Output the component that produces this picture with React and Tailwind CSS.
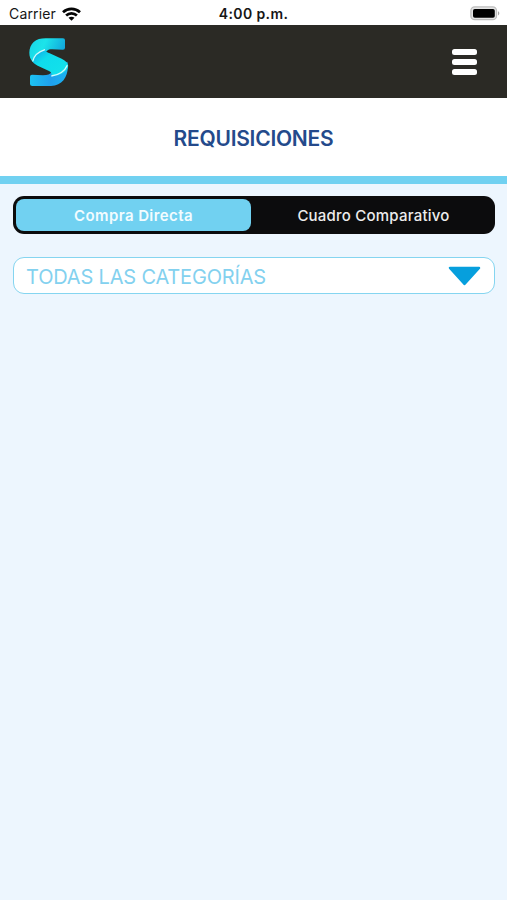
import { useState } from 'react';

const TABS = [
  { id: 'directa', label: 'Compra Directa', width: 'w-[235px]' },
  { id: 'comparativo', label: 'Cuadro Comparativo', width: 'flex-1 pl-1' },
];

const WifiIcon = () => (
  <svg width="19" height="14" viewBox="0 0 19 14" fill="none" stroke="#050505" strokeWidth="2.7">
    <path d="M1 5.2C5.8 0.7 13.2 0.7 18 5.2" />
    <path d="M4.1 8.5C7.2 5.6 11.8 5.6 14.9 8.5" />
    <path d="M9.5 13.8L6.5 10.8C8.2 9.3 10.8 9.3 12.5 10.8Z" fill="#050505" stroke="none" />
  </svg>
);

const BatteryIcon = () => (
  <svg width="30" height="15" viewBox="0 0 30 15" fill="none">
    <rect x="0.9" y="0.9" width="25.6" height="12.8" rx="3.8" fill="#e4e4e4" stroke="#bdbdbd" strokeWidth="1.3" />
    <rect x="3" y="3" width="21.8" height="8.7" rx="1.8" fill="#000" />
    <path d="M28 5.2C29.8 5.9 29.8 8.7 28 9.4Z" fill="#a5a5a5" />
  </svg>
);

const Logo = () => (
  <svg width="40" height="50" viewBox="28 21 120 150">
    <defs>
      <linearGradient id="logoTop" x1="0" y1="0" x2="1" y2="0.3">
        <stop offset="0" stopColor="#19d3e6" />
        <stop offset="0.45" stopColor="#1ce4ea" />
        <stop offset="1" stopColor="#12a9dc" />
      </linearGradient>
      <linearGradient id="logoBand" x1="0" y1="0" x2="1" y2="1">
        <stop offset="0" stopColor="#0fa0e6" />
        <stop offset="0.35" stopColor="#0fdcec" />
        <stop offset="1" stopColor="#14e3ea" />
      </linearGradient>
      <linearGradient id="logoBottom" x1="0" y1="0" x2="1" y2="0">
        <stop offset="0" stopColor="#1cc3f3" />
        <stop offset="0.55" stopColor="#1f9fec" />
        <stop offset="1" stopColor="#19b3f2" />
      </linearGradient>
    </defs>
    <path
      d="M37 134L70 136C84 136 92 133 95 127L143 95C150 132 132 168 94 168L38 168Q31 168 31 162L31 140Q31 134 37 134Z"
      fill="url(#logoBottom)"
    />
    <path
      d="M40 96C24 82 26 50 42 36C51 28 63 25 78 25L130 25Q136 25 136 31L136 53Q136 59 130 59L98 58C90 58 85 59 81 64C62 68 48 80 40 96Z"
      fill="url(#logoTop)"
    />
    <path
      d="M38 94C42 77 57 65 76 59C79 65 84 67 90 70L126 86C146 96 150 108 141 119C132 130 117 137 95 139C98 133 96 127 88 123L54 107C45 103 41 99 38 94Z"
      fill="url(#logoBand)"
    />
    <path d="M39 94C43 77 57 65 76 59" fill="none" stroke="#d5f8fc" strokeWidth="4" />
    <path d="M95 138C120 135 136 122 143 106" fill="none" stroke="#d5f8fc" strokeWidth="4" />
  </svg>
);

const StatusBar = () => (
  <div className="grid grid-cols-3 h-[25px] items-center bg-white pt-[2px] text-[#161616]">
    <div className="flex items-center gap-[6px] pl-[9px]">
      <span className="text-[14px] leading-5 tracking-[0.15px]">Carrier</span>
      <WifiIcon />
    </div>
    <span className="text-center text-[14px] leading-5 font-semibold tracking-[0.4px]">4:00 p.m.</span>
    <div className="flex justify-end pr-[7px]">
      <BatteryIcon />
    </div>
  </div>
);

const Header = () => (
  <header className="flex h-[73px] items-center justify-between bg-[#2b2a25] pl-[29px] pr-[30px]">
    <Logo />
    <button type="button" aria-label="Menú" className="flex w-[25px] flex-col gap-1">
      <span className="h-[6px] w-full rounded-[2.5px] bg-white" />
      <span className="h-[6px] w-full rounded-[2.5px] bg-white" />
      <span className="h-[6px] w-full rounded-[2.5px] bg-white" />
    </button>
  </header>
);

const App = () => {
  const [activeTab, setActiveTab] = useState('directa');

  return (
    <div className="flex min-h-screen flex-col bg-[#edf6fe] font-['Inter','Liberation_Sans',sans-serif]">
      <StatusBar />
      <Header />

      <div className="flex h-[86px] items-center justify-center border-b-8 border-[#71d1f1] bg-white pt-[3px]">
        <h1 className="text-[21px] font-semibold tracking-[-0.25px] text-[#244a8b]">REQUISICIONES</h1>
      </div>

      <main className="pl-[13px] pr-3 pt-3">
        <div className="flex h-[38px] rounded-[11px] bg-[#0c0c0d] p-[3px]">
          {TABS.map((tab) => (
            <button
              key={tab.id}
              type="button"
              onClick={() => setActiveTab(tab.id)}
              className={`${tab.width} rounded-lg pt-[2px] text-[15px] ${
                activeTab === tab.id
                  ? 'bg-[#71d1f1] font-semibold tracking-[0.4px] text-[#f2fcff]'
                  : 'font-medium tracking-[0.22px] text-[#ececec]'
              }`}
            >
              {tab.label}
            </button>
          ))}
        </div>

        <button
          type="button"
          className="mt-[23px] flex h-[37px] w-full items-center justify-between rounded-[11px] border border-[#85d5f0] bg-white pl-3 pr-[13px]"
        >
          <span className="pt-[2px] text-[20px] tracking-[-0.18px] text-[#83d1ef]">TODAS LAS CATEGORÍAS</span>
          <svg width="33" height="20" viewBox="0 0 33 20">
            <path
              d="M2 2H31L16.5 18Z"
              fill="#069fdd"
              stroke="#069fdd"
              strokeWidth="2.5"
              strokeLinejoin="round"
            />
          </svg>
        </button>
      </main>
    </div>
  );
};

export default App;
